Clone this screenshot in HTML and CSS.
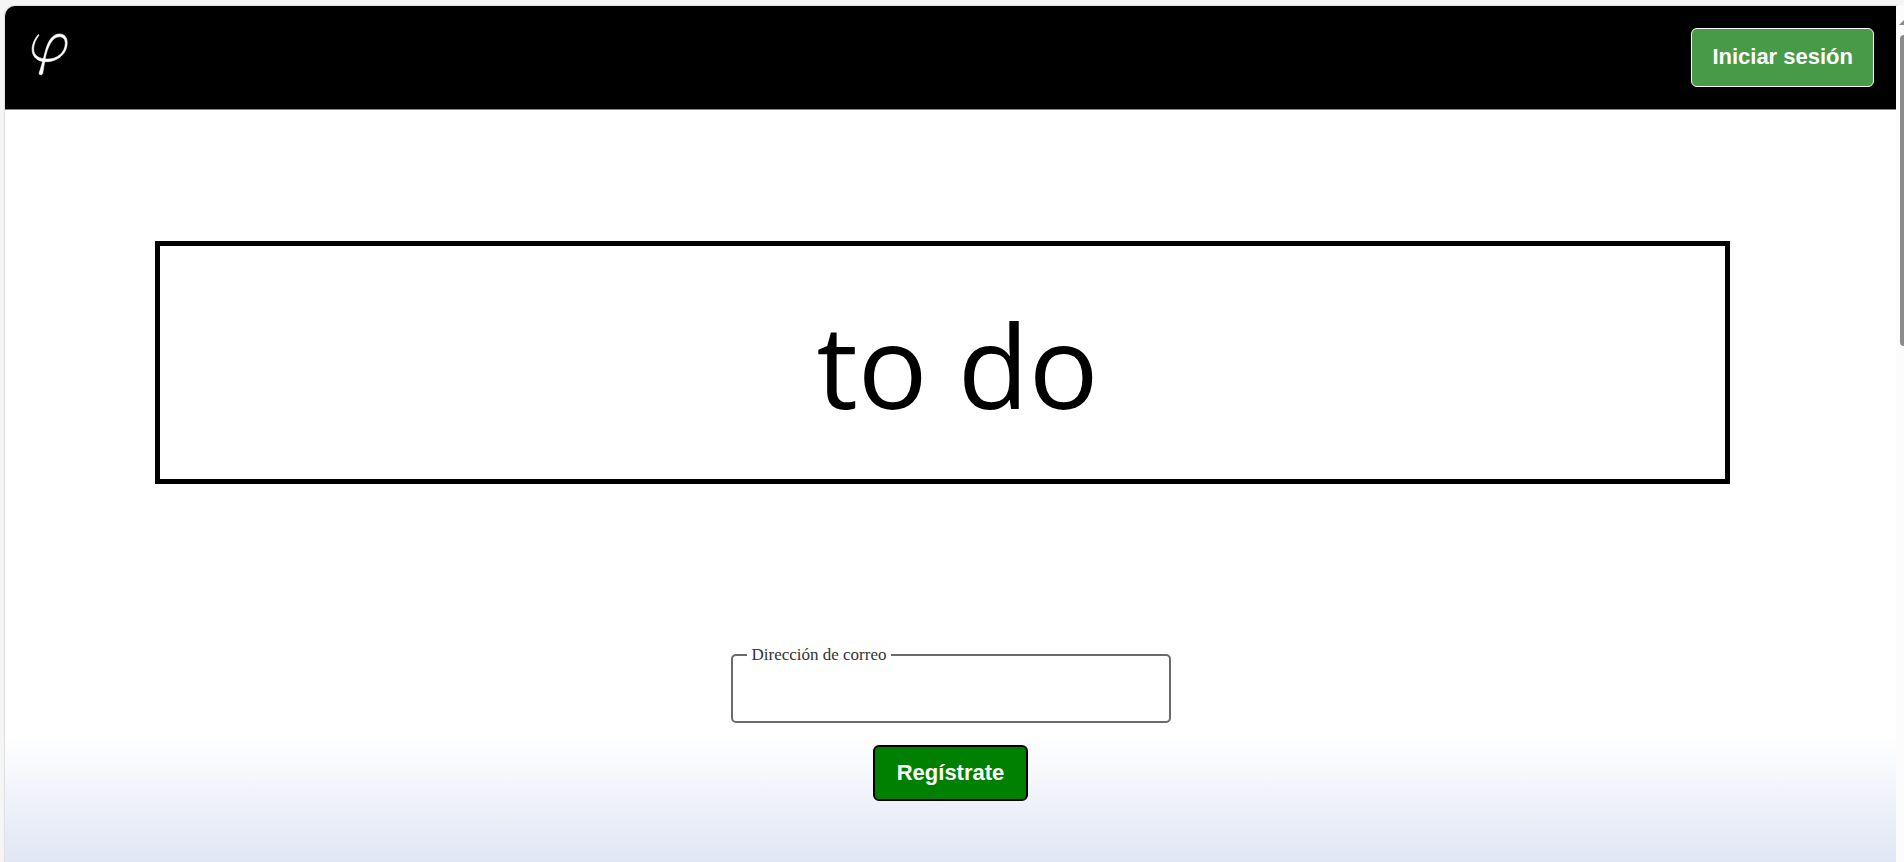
FILE: index.html
```html
<!DOCTYPE html>
<html lang="es">
<head>
  <meta charset="utf-8">
  <meta name="viewport" content="width=device-width, initial-scale=1">
  <title>to do</title>
  <link rel="stylesheet" href="styles.css">
</head>
<body>
  <div class="window">
    <div class="page">
      <header class="topbar">
        <a class="logo" href="#" aria-label="Inicio">
          <svg viewBox="30 32 40 44" width="40" height="44" aria-hidden="true">
            <path d="M38.3 34.6C34.5 38.8 32 44.6 32.1 49.8C32.3 57.4 38 61.8 46.1 61.8C57.8 61.8 67.2 53.6 67.2 42.8C67.2 37.1 64.1 33.9 59.5 33.9C52.7 33.9 48.2 40.7 45.7 49.8C43.8 56.8 42.5 62.9 40.4 69.3C39.7 71.4 38.8 73.1 39.2 74.1C39.8 75.3 42.3 75 42.7 73.6C43.5 69.2 44.1 64.4 45.2 58.6C47.3 47.7 52.1 36.8 59.1 36.8C63.2 36.8 65.4 39.3 65.3 43.5C65.1 52.6 57.2 59.1 47.8 59.1C39.2 59.1 33.5 55.5 33.6 48.9C33.7 44 36 39.1 39.1 35.1Z"/>
          </svg>
        </a>
        <button class="btn btn-login" type="button">Iniciar sesión</button>
      </header>
      <main class="content">
        <section class="hero">
          <h1 class="hero-title">to do</h1>
        </section>
        <form class="signup">
          <fieldset class="field">
            <legend class="field-legend"><label for="email">Dirección de correo</label></legend>
            <input class="field-input" id="email" type="email">
          </fieldset>
          <button class="btn btn-signup" type="button">Regístrate</button>
        </form>
      </main>
    </div>
    <div class="rail" aria-hidden="true">
      <svg class="rail-arrow" viewBox="0 0 5 5" width="5" height="5"><path d="M0 5L5 0V5Z"/></svg>
      <div class="rail-thumb"></div>
    </div>
  </div>
</body>
</html>
```
FILE: styles.css
```css
* {
  box-sizing: border-box;
}

body {
  margin: 0;
  background: #f5f5f5;
  font-family: "Liberation Serif", "Times New Roman", serif;
}

.window {
  display: grid;
  grid-template-columns: 1fr 8px;
  min-height: 100vh;
  padding: 6px 0 0 5px;
}

.page {
  display: flex;
  flex-direction: column;
  border-radius: 10px 0 0 0;
  overflow: hidden;
  box-shadow: 0 0 1px 1px #dedede;
}

.topbar {
  display: flex;
  justify-content: space-between;
  align-items: flex-start;
  padding: 22px 22px 22px 25px;
  background: #000;
  border-bottom: 1px solid #888;
}

.logo {
  display: block;
  padding-top: 4px;
}

.logo svg {
  display: block;
  fill: #fff;
  stroke: #fff;
  stroke-width: 0.6;
}

.btn {
  border-radius: 6px;
  color: #fff;
  font: bold 22px/24px "Liberation Sans", Arial, sans-serif;
}

.btn-login {
  padding: 16px 20px 17px;
  border: 1px solid #fff;
  background: #489a48;
}

.content {
  flex: 1;
  padding: 131px 0 61px;
  background: #fff linear-gradient(#fff, #e0e6f4) bottom / 100% 127px no-repeat;
}

.hero {
  margin: 0 166px 0 150px;
  padding: 50px 0 47px 30px;
  border: 5px solid #000;
  text-align: center;
}

.hero-title {
  margin: 0;
  font: 500 116px/136px "Open Sans", "Noto Sans", sans-serif;
}

.signup {
  display: flex;
  flex-direction: column;
  align-items: center;
  gap: 22px;
  margin-top: 161px;
}

.field {
  width: 440px;
  max-width: 100%;
  margin: 0;
  padding: 0 14px;
  border: 2px solid #6b6b6b;
  border-radius: 5px;
}

.field-legend {
  padding: 0 5px;
  color: #333;
  font-size: 17px;
  line-height: 20px;
}

.field-input {
  display: block;
  width: 100%;
  height: 56px;
  padding: 0;
  border: 0;
  outline: 0;
  background: transparent;
  font: 18px "Liberation Serif", serif;
}

.btn-signup {
  padding: 14px 22px;
  border: 2px solid #000;
  background: #008000;
}

.rail {
  display: flex;
  flex-direction: column;
  align-items: flex-end;
  gap: 10px;
  padding-top: 14px;
  background: #fcfcfc;
  overflow: hidden;
}

.rail-arrow {
  fill: #8b8b8b;
}

.rail-thumb {
  width: 4px;
  height: 311px;
  border-radius: 4px 0 0 4px;
  background: #8b8b8b;
}
```
